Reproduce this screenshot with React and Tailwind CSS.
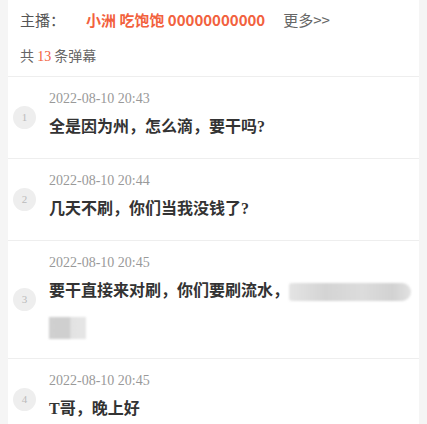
const rows = [
  { n: 1, time: "2022-08-10 20:43", text: "全是因为州，怎么滴，要干吗?" },
  { n: 2, time: "2022-08-10 20:44", text: "几天不刷，你们当我没钱了?" },
  { n: 3, time: "2022-08-10 20:45", text: "要干直接来对刷，你们要刷流水，", blurred: true },
  { n: 4, time: "2022-08-10 20:45", text: "T哥，晚上好" },
];

const serif = { fontFamily: '"Liberation Serif", "Noto Sans CJK SC", serif' };

export default function App() {
  return (
    <div
      className="min-h-screen bg-[#f5f5f5] px-2"
      style={{ fontFamily: '"Noto Sans CJK SC", "Noto Sans", sans-serif' }}
    >
      <div className="bg-white min-h-screen">
        {/* HEADER */}
        <div className="px-3 pt-[8px] pb-[9px] border-b border-[#eeeeee]">
          <div className="flex items-center h-[24px] leading-[24px] text-[15px]">
            <span className="text-[#555]">主播：</span>
            <span className="ml-[21px] font-bold text-[#f2613d]">小洲 吃饱饱 00000000000</span>
            <span className="ml-[18px] text-[#666]">更多&gt;&gt;</span>
          </div>
          <div className="mt-[11px] h-[24px] leading-[24px] text-[14px] text-[#666]">
            共 <span className="text-[#f2613d]" style={serif}>13</span> 条弹幕
          </div>
        </div>

        {/* LIST */}
        {rows.map((r) => (
          <div
            key={r.n}
            className="flex items-center pl-[5px] pr-[8px] pt-[12px] pb-[13px] border-b border-[#eeeeee]"
          >
            <div
              className="w-[23px] h-[23px] shrink-0 rounded-full bg-[#eeeeee] flex items-center justify-center text-[11px] text-[#bbb]"
              style={serif}
            >
              {r.n}
            </div>
            <div className="ml-[13px] flex-1" style={serif}>
              <div className="text-[14px] leading-[20px] text-[#999]">{r.time}</div>
              <div className="text-[16px] leading-[36px] font-bold text-[#333]">
                {r.text}
                {r.blurred && (
                  <>
                    <span className="inline-block align-middle w-[122px] h-[18px] rounded-r-[9px] rounded-l-[3px] bg-[linear-gradient(90deg,#e4e4e4,#d4d4d4_30%,#dcdcdc_60%,#d2d2d2_85%,#e2e2e2)] blur-[1px]" />
                    <span className="inline-block align-middle w-[37px] h-[22px] bg-[linear-gradient(90deg,#d0d0d0,#cfcfcf_55%,#e2e2e2_60%,#e6e6e6)] blur-[1px]" />
                  </>
                )}
              </div>
            </div>
          </div>
        ))}
      </div>
    </div>
  );
}
